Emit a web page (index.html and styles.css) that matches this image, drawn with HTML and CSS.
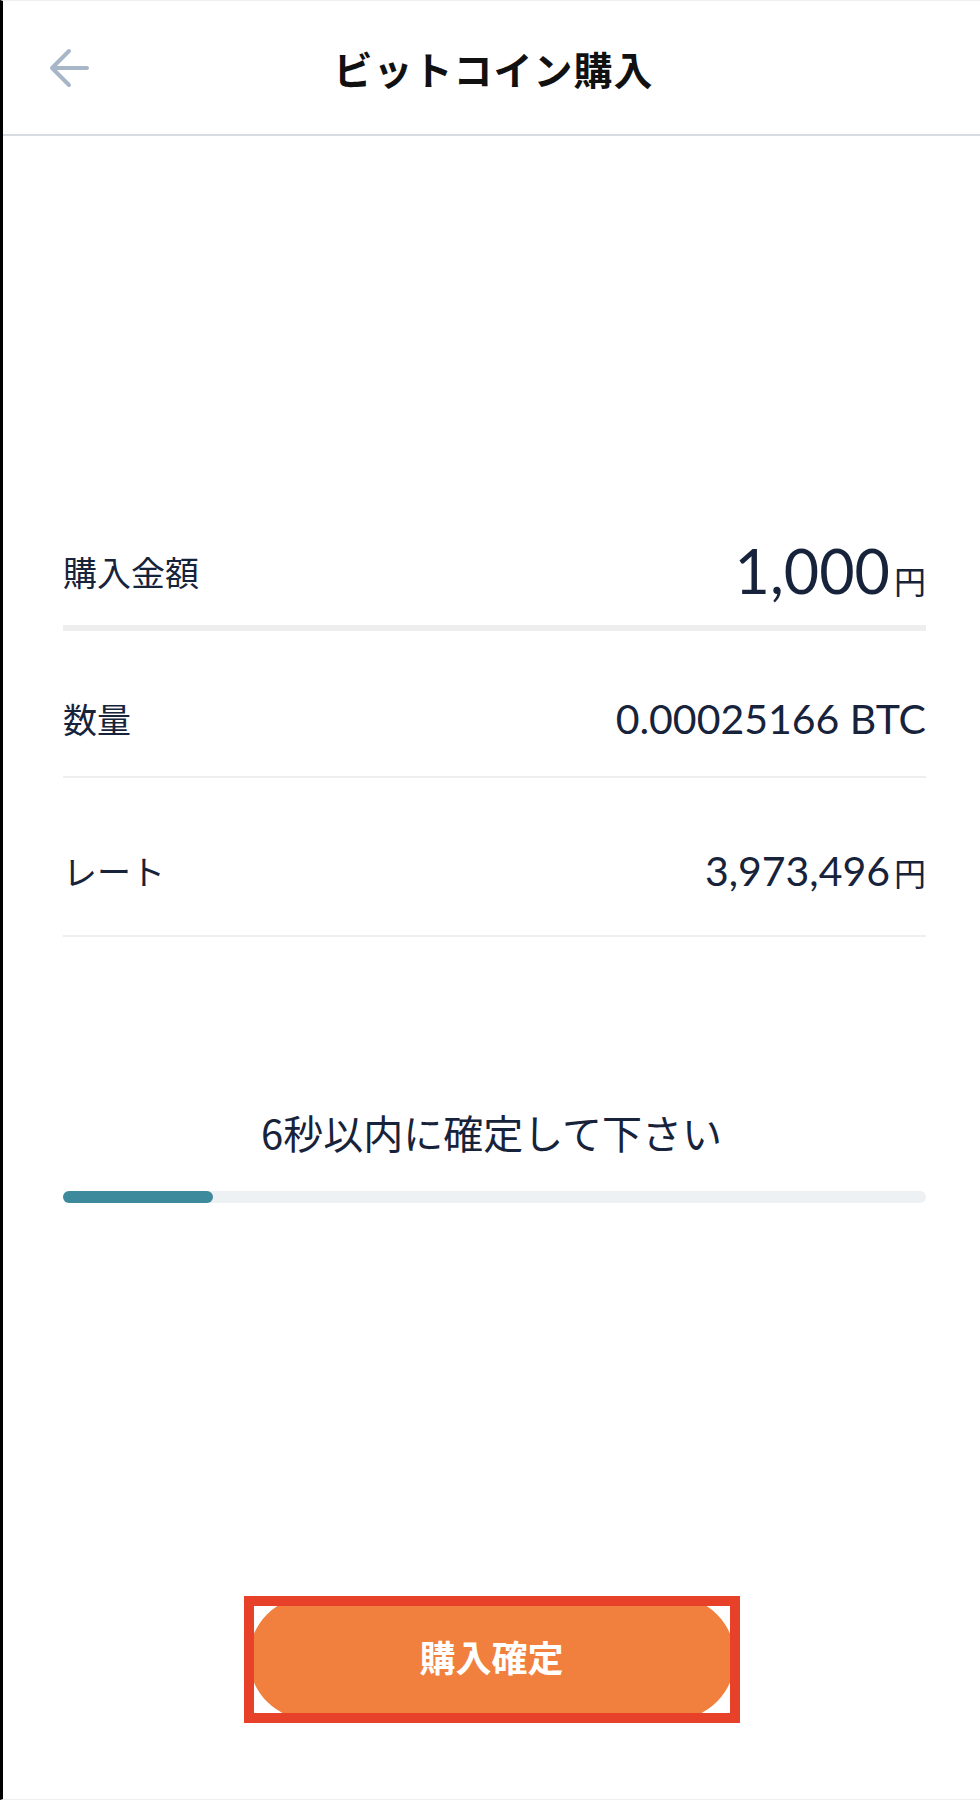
FILE: index.html
```html
<!DOCTYPE html>
<html lang="ja">
<head>
    <meta charset="UTF-8">
    <meta name="viewport" content="width=device-width, initial-scale=1.0">
    <title>ビットコイン購入</title>
    <link rel="stylesheet" href="styles.css">
</head>
<body>

<div class="screen">
    <header class="topbar">
        <button class="back" aria-label="戻る">
            <svg width="40" height="40" viewBox="0 0 40 40" fill="none" stroke="#a8b7c8" stroke-width="4" stroke-linecap="round" stroke-linejoin="round">
                <path d="M3 20 H38 M3 20 L20 3 M3 20 L20 37"/>
            </svg>
        </button>
        <h1>ビットコイン購入</h1>
        <span></span>
    </header>

    <div class="summary">
        <div class="row row-amount">
            <span class="label">購入金額</span>
            <span class="value"><span class="big">1,000</span><span class="yen">円</span></span>
        </div>
        <div class="row row-qty">
            <span class="label">数量</span>
            <span class="value">0.00025166 BTC</span>
        </div>
        <div class="row row-rate">
            <span class="label">レート</span>
            <span class="value">3,973,496<span class="yen">円</span></span>
        </div>
    </div>

    <p class="notice">6秒以内に確定して下さい</p>
    <div class="timer">
        <div class="timer-fill" style="width: 17.4%"></div>
    </div>

    <div class="confirm">
        <button class="confirm-btn">購入確定</button>
    </div>
</div>

</body>
</html>
```

FILE: styles.css
```css
body {
    margin: 0;
    background: #fff;
    font-family: "Noto Sans CJK JP", "Noto Sans", sans-serif;
    color: #17233b;
}
.screen {
    height: 1800px;
    box-sizing: border-box;
    border-left: 3px solid #000;
    border-top: 1px solid #f0f0f0;
    border-bottom: 1px solid #f0f0f0;
    display: flex;
    flex-direction: column;
}
.topbar {
    height: 133px;
    border-bottom: 2px solid #d6dce2;
    display: grid;
    grid-template-columns: 1fr auto 1fr;
    align-items: center;
}
.back {
    justify-self: start;
    margin-left: 46px;
    padding: 0;
    border: none;
    background: none;
    display: flex;
}
h1 {
    margin: 0 0 0 4px;
    font-size: 39px;
    font-weight: 700;
    color: #111;
    letter-spacing: 1px;
}
.summary {
    margin: 381px 54px 0 60px;
}
.row {
    display: flex;
    justify-content: space-between;
    align-items: center;
    box-sizing: border-box;
    border-bottom: 2px solid #eeeeee;
}
.row-amount {
    height: 114px;
    border-bottom-width: 6px;
}
.row-qty {
    height: 147px;
    padding-top: 30px;
}
.row-rate {
    height: 159px;
    padding-top: 28px;
}
.label {
    font-size: 34px;
    font-weight: 400;
}
.value {
    font-family: Lato, "Noto Sans CJK JP", sans-serif;
    font-size: 41px;
    font-weight: 400;
    display: flex;
    align-items: baseline;
}
.big {
    font-size: 61px;
    line-height: 1;
}
.yen {
    font-family: "Noto Sans CJK JP", sans-serif;
    font-size: 32px;
    margin-left: 4px;
}
.notice {
    margin: 170px 0 0;
    text-align: center;
    font-size: 40px;
    line-height: 50px;
}
.timer {
    margin: 34px 54px 0 60px;
    height: 12px;
    border-radius: 6px;
    background: #eef1f4;
}
.timer-fill {
    height: 100%;
    border-radius: 6px;
    background: #3d8a9c;
}
.confirm {
    margin-top: auto;
    margin-bottom: 79px;
    align-self: center;
    position: relative;
    padding: 0 5px;
}
.confirm::after {
    content: "";
    position: absolute;
    inset: 0 0 -3px 0;
    border: 10px solid #e8412a;
}
.confirm-btn {
    display: block;
    width: 486px;
    height: 124px;
    border: none;
    border-radius: 62px;
    background: #f1803e;
    color: #fff;
    font-family: "Noto Sans CJK JP", sans-serif;
    font-size: 36px;
    font-weight: 700;
    padding-bottom: 6px;
}
```
